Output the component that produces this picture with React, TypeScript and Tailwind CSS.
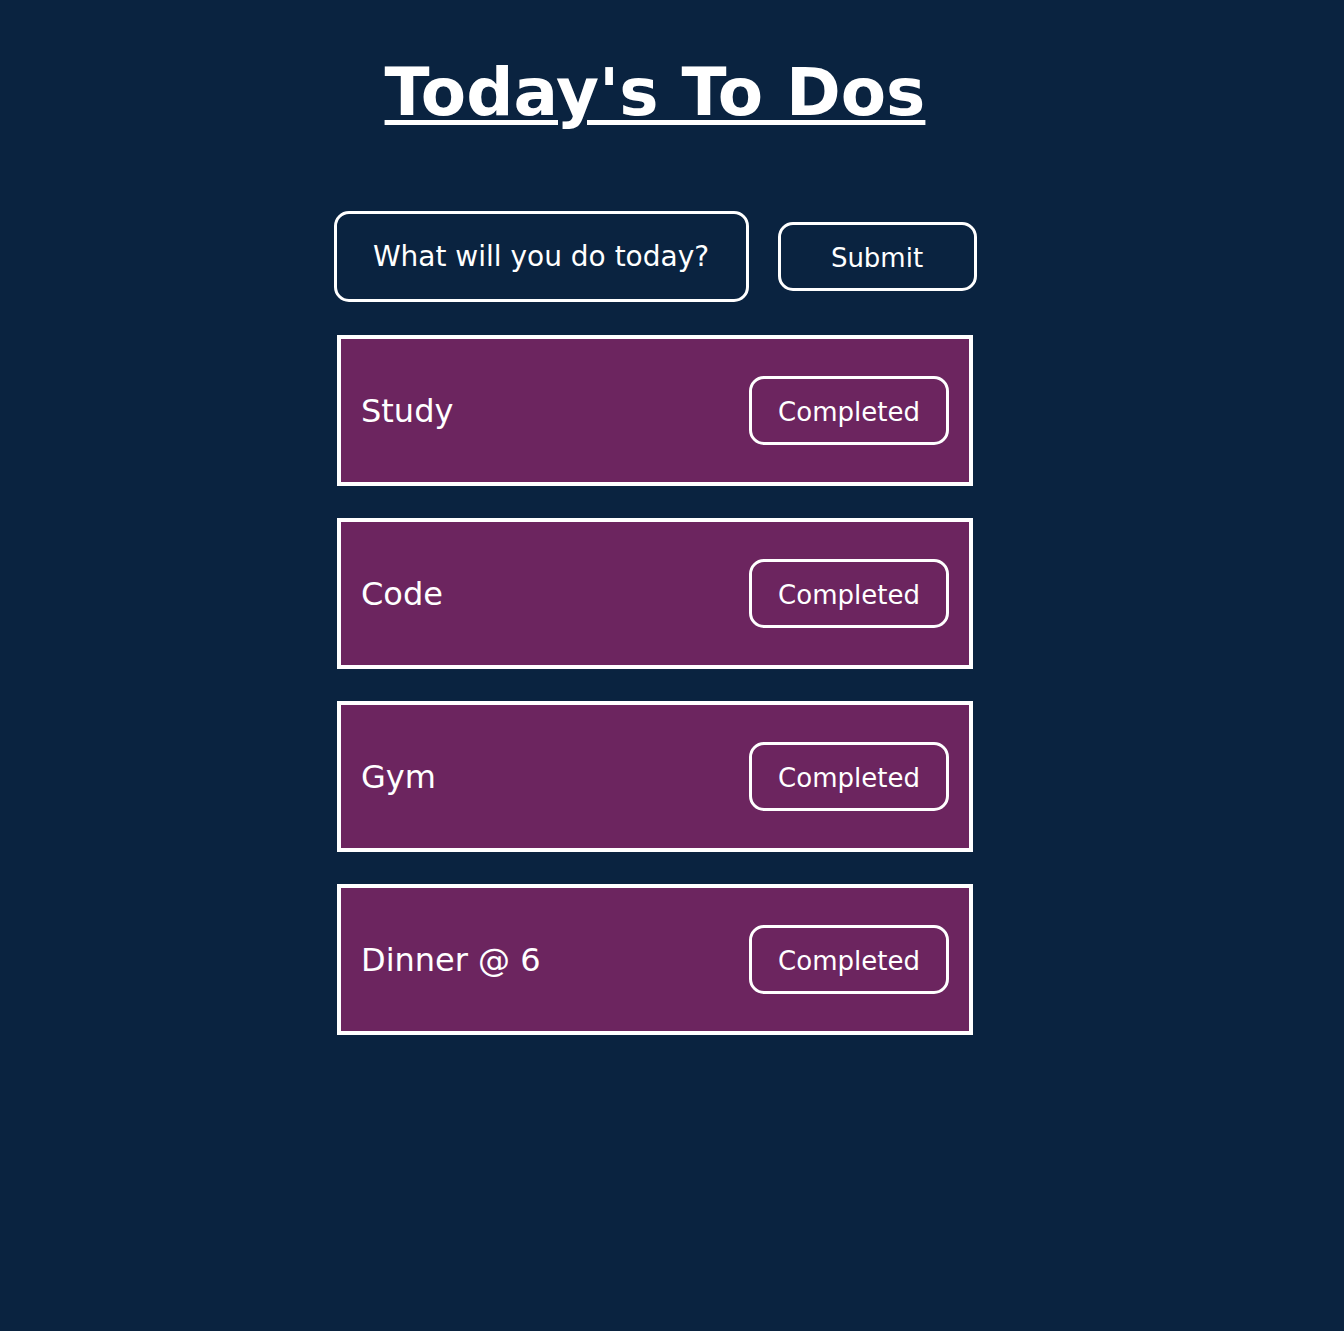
import { useState } from "react";

const initialTodos = ["Study", "Code", "Gym", "Dinner @ 6"];

function TodoItem({ title }: { title: string }) {
  return (
    <div className="flex h-[151px] w-[636px] items-center justify-between border-4 border-white bg-[#6c255f] px-[20px]">
      <span className="pt-[2px] text-[32px] text-white">{title}</span>
      <button
        type="button"
        className="h-[69px] w-[200px] rounded-[15px] border-[3px] border-white pt-[4px] text-[26px] text-white"
      >
        Completed
      </button>
    </div>
  );
}

export default function App() {
  const [todos] = useState(initialTodos);

  return (
    <div className="min-h-[1331px] bg-[#0a2340] pr-[34px] pt-[55px] font-['DejaVu_Sans',Verdana,sans-serif] text-white">
      <div className="flex flex-col items-center">
        <h1 className="text-[66px] font-bold leading-[1.164] underline decoration-[5px] underline-offset-[5px]">
          Today's To Dos
        </h1>

        <form
          className="mt-[79px] flex items-center gap-[29px]"
          onSubmit={(e) => e.preventDefault()}
        >
          <input
            type="text"
            placeholder="What will you do today?"
            className="h-[91px] w-[415px] rounded-[15px] border-[3px] border-white bg-transparent text-center text-[28px] text-white outline-none placeholder:text-white"
          />
          <button
            type="submit"
            className="h-[69px] w-[199px] rounded-[15px] border-[3px] border-white pt-[4px] text-[26px] text-white"
          >
            Submit
          </button>
        </form>

        <div className="mt-[33px] flex flex-col gap-[32px]">
          {todos.map((todo) => (
            <TodoItem key={todo} title={todo} />
          ))}
        </div>
      </div>
    </div>
  );
}
